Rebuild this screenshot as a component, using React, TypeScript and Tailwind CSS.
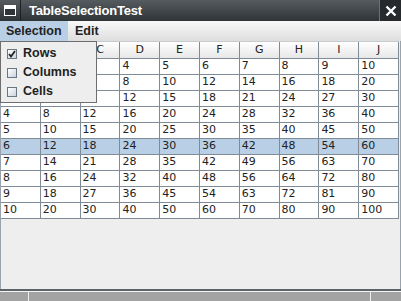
const cols = ["A", "B", "C", "D", "E", "F", "G", "H", "I", "J"];
const rows = [1, 2, 3, 4, 5, 6, 7, 8, 9, 10];

function Check({ on }: { on?: boolean }) {
  return (
    <div className="w-[10px] h-[10px] border border-[#6b7780] bg-gradient-to-br from-white to-[#c9d3dc] flex items-center justify-center">
      {on && (
        <svg width="8" height="8" viewBox="0 0 8 8">
          <path d="M1 4 L3 6.5 L7 1" stroke="#222" strokeWidth="1.8" fill="none" />
        </svg>
      )}
    </div>
  );
}

export default function App() {
  return (
    <div className="w-[401px] h-[301px] bg-[#eeeeee] flex flex-col overflow-hidden relative" style={{ fontFamily: '"DejaVu Sans", sans-serif' }}>
      {/* title bar */}
      <div className="h-[21px] flex bg-gradient-to-b from-[#555b5f] to-[#2f3437] text-white">
        <div className="w-[21px] flex items-center justify-center border-r border-[#1d2123]">
          <div className="w-[12px] h-[11px] border border-white bg-[#2f3437] flex flex-col">
            <div className="h-[3px] bg-white" />
          </div>
        </div>
        <div className="flex-1 pl-[8px] flex items-center text-[13px] font-bold tracking-[-0.2px]" style={{ fontFamily: '"Liberation Sans", sans-serif' }}>
          TableSelectionTest
        </div>
        <div className="w-[22px] flex items-center justify-center bg-[#262a2c] border-l border-[#6a7074]">
          <svg width="12" height="12" viewBox="0 0 12 12">
            <path d="M1.5 1.5 L10.5 10.5 M10.5 1.5 L1.5 10.5" stroke="white" strokeWidth="2.4" />
          </svg>
        </div>
      </div>

      {/* menu bar */}
      <div className="h-[20px] flex items-stretch bg-gradient-to-b from-[#f8f8f8] to-[#dedede] text-[12.5px] font-bold text-[#222]" style={{ fontFamily: '"Liberation Sans", sans-serif' }}>
        <div className="w-[68px] bg-[#b8cfe5] flex items-center pl-[6px]">Selection</div>
        <div className="flex items-center pl-[7px]">Edit</div>
      </div>

      {/* table */}
      <div className="flex border-l border-r border-[#9aa3ab]">
        <div className="w-[398px] flex flex-col text-[11px] text-[#222]">
          <div className="flex h-[18px] bg-gradient-to-b from-white to-[#e6e6e6] border-t border-[#c8ccd0]">
            {cols.map((c) => (
              <div key={c} className="flex-1 border-r border-b border-[#7f8b96] flex items-center justify-center">
                {c}
              </div>
            ))}
          </div>
          {rows.map((r) => (
            <div key={r} className={`flex h-[16px] ${r === 6 ? "bg-[#b8cfe5]" : "bg-white"}`}>
              {cols.map((c, j) => (
                <div key={c} className="flex-1 border-r border-b border-[#7f8b96] flex items-center pl-[2px]">
                  {r * (j + 1)}
                </div>
              ))}
            </div>
          ))}
        </div>
      </div>

      <div className="flex-1 border-l border-r border-[#9aa3ab]" />

      {/* bottom frame */}
      <div className="h-[2px] bg-[#5d6469]" />
      <div className="h-[1px] bg-[#f4f4f4]" />
      <div className="h-[9px] bg-[#a3a3a3] flex">
        <div className="w-[29px] border-r border-[#eeeeee]" />
        <div className="w-[342px] border-r border-[#eeeeee]" />
        <div className="flex-1" />
      </div>

      {/* popup menu */}
      <div className="absolute left-0 top-[41px] w-[97px] h-[62px] bg-[#eeeeee] border border-[#6e6e6e] pt-[2px] flex flex-col text-[12.5px] font-bold text-[#222]" style={{ fontFamily: '"Liberation Sans", sans-serif' }}>
        {[
          ["Rows", true],
          ["Columns", false],
          ["Cells", false],
        ].map(([t, on]) => (
          <div key={t as string} className="h-[19px] flex items-center pl-[6px] gap-[6px]">
            <Check on={on as boolean} />
            <span>{t as string}</span>
          </div>
        ))}
      </div>
    </div>
  );
}
